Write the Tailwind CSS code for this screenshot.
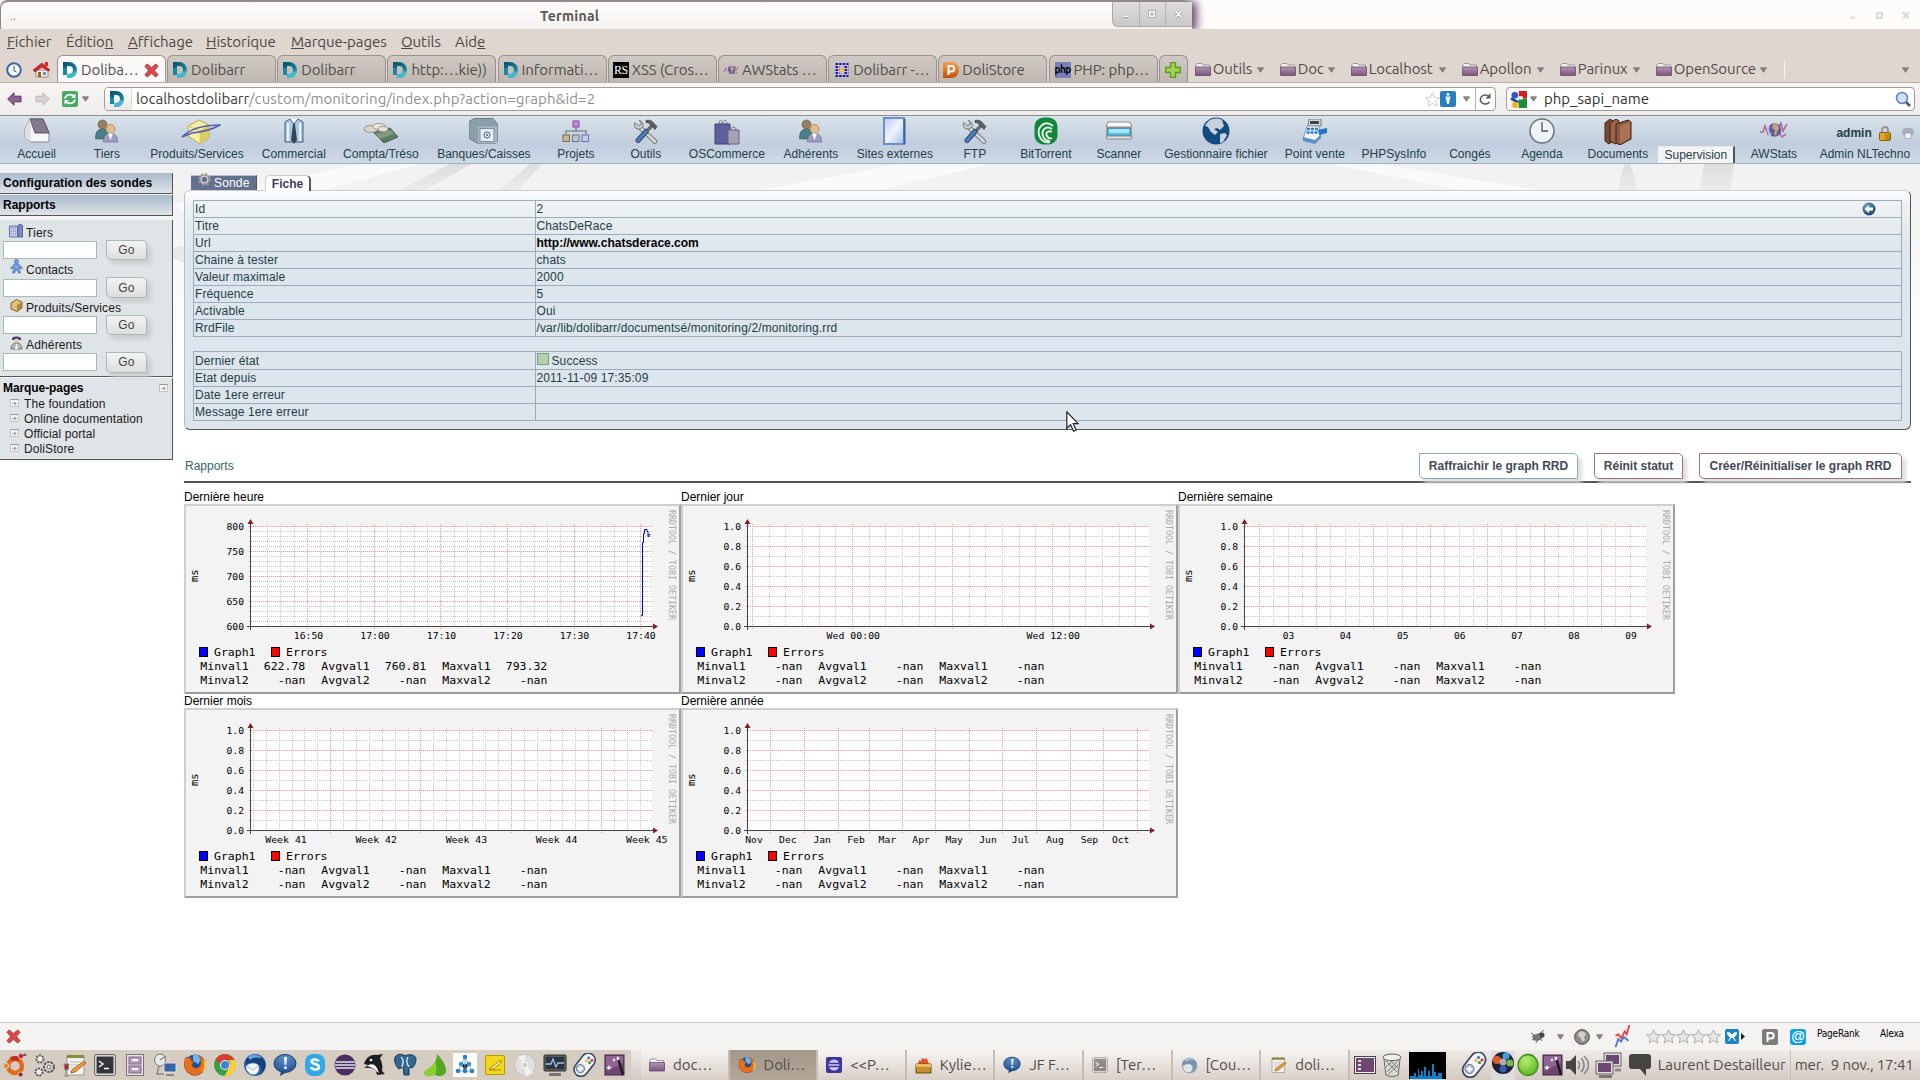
<!DOCTYPE html>
<html lang="fr">
<head>
<meta charset="utf-8">
<title>Dolibarr - Supervision</title>
<script src="https://cdn.jsdelivr.net/npm/@tailwindcss/browser@4"></script>
</head>
<body class="w-[1920px] h-[1080px] overflow-hidden bg-white flex flex-col font-['Liberation_Sans',Arial,sans-serif] text-[12px] text-black">

<svg class="absolute size-0">
  <defs>
    <linearGradient id="gTeal" x1="0" y1="0" x2="1" y2="1"><stop offset="0" stop-color="#0b4f6c"/><stop offset=".6" stop-color="#127a96"/><stop offset="1" stop-color="#4cc3d6"/></linearGradient>
    <linearGradient id="gPurple" x1="0" y1="0" x2="0" y2="1"><stop offset="0" stop-color="#b096b0"/><stop offset="1" stop-color="#7a557c"/></linearGradient>
    <linearGradient id="gOrange" x1="0" y1="0" x2="0" y2="1"><stop offset="0" stop-color="#f6a04c"/><stop offset="1" stop-color="#c2510c"/></linearGradient>
    <linearGradient id="gBlueDoor" x1="0" y1="0" x2="1" y2="1"><stop offset="0" stop-color="#b9cdf0"/><stop offset=".5" stop-color="#eef4fd"/><stop offset="1" stop-color="#a5bfe8"/></linearGradient>
    <linearGradient id="gStreak" x1="0" y1="0" x2="0" y2="1"><stop offset="0" stop-color="#dedede"/><stop offset="1" stop-color="#dedede" stop-opacity="0"/></linearGradient>
    <radialGradient id="gBall" cx=".35" cy=".3" r=".8"><stop offset="0" stop-color="#6fa4c8"/><stop offset="1" stop-color="#123a5c"/></radialGradient>
    <radialGradient id="gGreen" cx=".4" cy=".3" r=".8"><stop offset="0" stop-color="#b8f070"/><stop offset="1" stop-color="#4fae1c"/></radialGradient>
    <radialGradient id="gBubble" cx=".5" cy=".2" r=".9"><stop offset="0" stop-color="#5c93cf"/><stop offset="1" stop-color="#1f4a8a"/></radialGradient>
  </defs>
  <symbol id="doli" viewBox="0 0 16 16"><path fill-rule="evenodd" d="M1 0h6a8 8 0 0 1 0 16H5.500v-4H7a4 4 0 0 0 0-8H5v9H1z" fill="url(#gTeal)"/><path d="M1 6h4v7H1z" fill="#1789a8"/><path d="M5.500 12H7a4 4 0 0 0 3.800-3l4 1A8 8 0 0 1 7 16H5.500z" fill="#45b7cf"/></symbol>
  <symbol id="down" viewBox="0 0 8 6"><path d="M.5.5h7L4 5.500z" fill="#8c8782" stroke="#6d6863" stroke-width=".8"/></symbol>
  <symbol id="folder" viewBox="0 0 16 13"><path d="M1 1.500 2 .5h5l1 1.500h6.500V5H1z" fill="#f4f1f4" stroke="#8b8389" stroke-width=".8"/><path d="M.5 4h15v8.500H.5z" fill="url(#gPurple)" stroke="#6b476d" stroke-width=".8"/></symbol>
  <symbol id="redx" viewBox="0 0 16 16"><path d="M3.500 1 8 5l4.500-4L15 3.500 11 8l4 4.500L12.500 15 8 11l-4.500 4L1 12.500 5 8 1 3.500z" fill="#d94b4b" stroke="#a62828" stroke-width=".9" stroke-linejoin="round"/></symbol>
  <symbol id="tools" viewBox="0 0 26 24"><path d="M7 8 22 22" stroke="#777" stroke-width="4.500" stroke-linecap="round"/><path d="M7 8 22 22" stroke="#d5d8d6" stroke-width="2.800" stroke-linecap="round"/><path d="M2 3l3 3 3-1V2L6 1a5 5 0 0 1 4 6 5 5 0 0 1-8 1 5 5 0 0 1 0-5z" fill="#c8ccca" stroke="#666" stroke-width=".8"/><path d="M19 6 5 21" stroke="#6b6f72" stroke-width="3.500" stroke-linecap="round"/><path d="M13 12 5 21" stroke="#2c4568" stroke-width="5" stroke-linecap="round"/><path d="M13 12 5 21" stroke="#4e7fbd" stroke-width="3.200" stroke-linecap="round"/><path d="M13 1c4-1 7 1 8 3l3 3-2 3-4-4c-1-2-3-3-5-3z" fill="#5b5f5d" stroke="#333" stroke-width=".6"/></symbol>
  <symbol id="people" viewBox="0 0 24 24"><circle cx="8" cy="5.500" r="4.500" fill="#9b7f5e" stroke="#6e5a44" stroke-width=".7"/><path d="M1 20c0-7 2-10 7-10s7 3 7 10z" fill="#4b7f86" stroke="#365c62" stroke-width=".7"/><circle cx="16" cy="10" r="4.500" fill="#e3bb8e" stroke="#a07a50" stroke-width=".7"/><path d="M9 23c0-6 2-8.500 7-8.500s7 2.500 7 8.500z" fill="#9a9cc0" stroke="#6b6d92" stroke-width=".7"/><path d="M13.500 14.500 16 21l2.500-6.500z" fill="#fff"/></symbol>
  <symbol id="awstats" viewBox="0 0 28 18"><path d="M0 11h3l2-6 3 8 2-6M18 7l3-5 2 8 4-7M19 12l3 4 4-3" fill="none" stroke="#b06c94" stroke-width="1.600"/><circle cx="14.500" cy="9" r="6.800" fill="#5a5f9c"/><path d="M13 3c4-1 6 2 6 5l-2 3-1 4-2-2 1-4-3-2z" fill="#c9a07c"/><path d="M9 5c-2 3-1 7 2 9" stroke="#c5c9ea" stroke-width="2" fill="none"/></symbol>
  <symbol id="pad" viewBox="0 0 26 26"><rect x="5" y="-1" width="15" height="28" rx="7.500" transform="rotate(38 13 13)" fill="#f3f5f8" stroke="#3a4a66" stroke-width="1.800"/><circle cx="8" cy="17" r="4.500" fill="#b9c2d0" stroke="#5a6d8e"/><path d="M8 14v6M5 17h6" stroke="#fff" stroke-width="1.800"/><circle cx="17" cy="5.500" r="1.600" fill="#3a74d0"/><circle cx="20.500" cy="8" r="1.600" fill="#d33"/><circle cx="14.500" cy="8.500" r="1.600" fill="#e8c020"/><circle cx="18" cy="10.500" r="1.600" fill="#2a9a3a"/></symbol>
  <symbol id="wand" viewBox="0 0 22 24"><rect x="1" y="2" width="19" height="20" fill="#6f4672" stroke="#432546"/><path d="M2 3h17v7L2 18z" fill="#8f6691"/><path d="M14 5l5 17" stroke="#1a1a1a" stroke-width="2.400"/><path d="M13.500 4l1 3" stroke="#fff" stroke-width="2.400"/><path d="M5 12l1 2 2 .5-2 1-1 2-1-2-2-1 2-.5zM10 5l.6 1.400 1.400.6-1.400.6L10 9l-.6-1.400L8 7l1.400-.6z" fill="#fff"/></symbol>
  <symbol id="ffox" viewBox="0 0 24 24"><circle cx="12" cy="12" r="10.500" fill="#1d4fa0"/><path d="M10 2c5-1 8 2 8 5l-3 4-5-3z" fill="#6db5ea"/><path d="M3 4c2 1 3 1 5 1-1 2 0 3 3 4-2 1-3 3-1 5 3 3 8 0 8-4 0-3-1-5-2-7 5 2 7 6 6.500 10A10.700 10.700 0 1 1 1.500 9C2 7 2 6 3 4z" fill="#e8701a" stroke="#b94a08" stroke-width=".6"/><path d="M20 7c2 4 2 9-2 12 4-1 6-5 5-9-.5-1-2-3-3-3z" fill="#f9cf3e"/></symbol>
  <symbol id="bubble" viewBox="0 0 24 24"><ellipse cx="12" cy="10.500" rx="11" ry="9" fill="url(#gBubble)" stroke="#1b3d72"/><path d="M8 18l-1 5 7-4z" fill="#1f4a8a"/><path d="M11 4h3l-.8 8h-1.500zM11.200 13.500h2.500V16h-2.500z" fill="#fff"/></symbol>
  <symbol id="term" viewBox="0 0 22 22"><rect x=".7" y=".7" width="20.600" height="20.600" rx="1.500" fill="#eee" stroke="#555"/><rect x="2.500" y="2.500" width="17" height="17" fill="#33373b"/><path d="M5 7l4 3-4 3M10 14.500h5" stroke="#fff" stroke-width="1.400" fill="none"/></symbol>
  <symbol id="notepad" viewBox="0 0 24 24"><rect x="4" y="3" width="17" height="19" fill="#f2f2ef" stroke="#999"/><path d="M4 2h17v3H4z" fill="#8b8a3a"/><path d="M7 9h11M7 12h11M7 15h11M7 18h8" stroke="#bbb"/><path d="M9 17 21 8l2 2-11 9-4 1z" fill="#ef9b34" stroke="#8a4b10" stroke-width=".7"/></symbol>
  <symbol id="star" viewBox="0 0 16 16"><path d="M8 .8l2.200 4.800 5.200.6-3.900 3.500 1.100 5.200L8 12.300 3.400 14.900l1.100-5.200L.6 6.200l5.200-.6z" fill="#e6e6e6" stroke="#a5a5a5" stroke-width=".9"/></symbol>
  <symbol id="ext" viewBox="0 0 9 8"><rect x=".5" y=".5" width="8" height="7" fill="#f3f3f3" stroke="#c4c4c4"/><path d="M.5.5h8" stroke="#999"/><path d="M2 4.500h2.500M4.500 3l2 1.500-2 1.500z" stroke="#9a9a9a" stroke-width=".6" fill="#9a9a9a"/></symbol>
  <symbol id="cog" viewBox="0 0 16 16"><circle cx="8" cy="8" r="5" fill="none" stroke="#9a9a98" stroke-width="2.800"/><circle cx="8" cy="8" r="7" fill="none" stroke="#9a9a98" stroke-width="2" stroke-dasharray="2.600 2.900"/><circle cx="8" cy="8" r="4.200" fill="none" stroke="#e2e2e0" stroke-width="1.200"/></symbol>
  <symbol id="tbird" viewBox="0 0 24 24"><circle cx="12" cy="12" r="11" fill="#2465ae"/><path d="M4 5c5-5 15-4 18 4 1 5-1 10-5 13 2-4 2-8-1-10C12 8 7 9 3 12c-1-3 0-5 1-7z" fill="#164079"/><path d="M3 13c3-3 9-4 12-1 2 3 1 7-2 9-5 2-10-2-10-8z" fill="#f3f5f8"/><path d="M4 13l6 4 5-4" stroke="#aab7c8" fill="none"/><path d="M5 4c4-3 10-3 14 1-5-1-9-1-12 2z" fill="#63a6e2"/></symbol>
</svg>

<!-- Title bar -->
<header class="h-[29px] flex-none flex justify-between overflow-hidden bg-[#fdfcfb]">
  <div class="w-[1192px] h-[31px] flex-none flex items-center rounded-t-lg border-t-2 border-l border-[#8d8a87] bg-linear-to-b from-[#fdfcfb] to-[#f4f2f0] shadow-[5px_0_9px_#6c4f74]">
    <span class="w-[30px] flex-none pl-[9px] text-[11px] text-[#777]">..</span>
    <span class="pl-[509px] w-[1081px] flex-none font-['Ubuntu','Noto_Sans',sans-serif] text-[14px] tracking-[0.25px] font-bold text-[#5b5753]">Terminal</span>
    <div class="flex-none flex h-[25px] w-[80px] self-start rounded-bl-md border-l border-b border-[#aaa7a4] bg-linear-to-b from-[#dedddb] to-[#cbc9c7]">
      <svg class="h-full w-[26px]" viewBox="0 0 26 26"><path d="M10 16h5" stroke="#8c8a88" stroke-width="3"/><path d="M10 15.500h5" stroke="#fff" stroke-width="2"/></svg>
      <svg class="h-full w-[26px] border-l border-[#b5b2af]" viewBox="0 0 26 26"><rect x="10" y="10.500" width="5" height="5" fill="none" stroke="#8c8a88" stroke-width="3"/><rect x="10" y="10.500" width="5" height="5" fill="none" stroke="#fff" stroke-width="1.800"/></svg>
      <svg class="h-full w-[26px] border-l border-[#b5b2af]" viewBox="0 0 26 26"><path d="M10 10l6 6.500M16 10l-6 6.500" stroke="#8c8a88" stroke-width="3.200"/><path d="M10 10l6 6.500M16 10l-6 6.500" stroke="#fff" stroke-width="2"/></svg>
    </div>
  </div>
  <svg class="w-[80px] h-[29px]" viewBox="0 0 80 29"><path d="M10 17.500h5" stroke="#dcdad8" stroke-width="2"/><rect x="37" y="13" width="5" height="5" fill="none" stroke="#dcdad8" stroke-width="2"/><path d="M63 12l6 6.500M69 12l-6 6.500" stroke="#dcdad8" stroke-width="2.400"/></svg>
</header>

<!-- Menu bar -->
<nav class="h-[25px] flex-none flex items-center pl-[7px] pt-px bg-[#dfd6cf] font-['Ubuntu','Noto_Sans',sans-serif] text-[15px] tracking-[-0.05px] text-[#4b4845] whitespace-nowrap">
  <span class="w-[59px]"><u>F</u>ichier</span><span class="w-[62px]">Éditio<u>n</u></span><span class="w-[78px]"><u>A</u>ffichage</span><span class="w-[85px]"><u>H</u>istorique</span><span class="w-[110px]"><u>M</u>arque-pages</span><span class="w-[54px]"><u>O</u>utils</span><span>Aid<u>e</u></span>
</nav>

<!-- Tab strip -->
<div class="h-[29px] flex-none flex items-end pt-px bg-[#dfd6cf] border-b border-[#b5aea8] font-['Ubuntu','Noto_Sans',sans-serif] text-[15px] tracking-[-0.1px] text-[#4f4c49] whitespace-nowrap [&>div]:pt-[2px]">
  <div class="w-[57px] h-full flex items-center gap-[11px] pl-[6px]">
    <svg class="size-4 flex-none" viewBox="0 0 16 16"><circle cx="8" cy="8" r="6.800" fill="#f6f9fe" stroke="#3d66a8" stroke-width="2"/><path d="M8 4v4.500l2.500 1.500" stroke="#444" fill="none"/></svg>
    <svg class="w-[18px] h-4 flex-none" viewBox="0 0 18 16"><path d="M3 8h12v7H3z" fill="#f3efe4" stroke="#8d7a63" stroke-width=".8"/><path d="M0 8 9 1l8 7-2 1-6-4-7 5z" fill="#d8262c" stroke="#8e1216" stroke-width=".6"/><path d="M12 0h3v4h-3z" fill="#d8262c"/><path d="M5 10h3v5H5z" fill="#a35c28"/><path d="M10 10h3v3h-3z" fill="#5c8dd6"/></svg>
  </div>
  <div class="w-[109px] h-[27px] mr-px flex items-center gap-[3px] pl-[4px] rounded-t-md border border-b-0 border-[#9b9590] bg-[#faf9f8]"><svg class="size-4 flex-none"><use href="#doli"/></svg><span class="w-[60px]">Doliba…</span><svg class="size-[15px] flex-none"><use href="#redx"/></svg></div>
  <div class="w-[109px] h-[27px] mr-[1.2px] flex items-center gap-[3px] pl-[4px] rounded-t-md border border-b-0 border-[#97918b] bg-linear-to-b from-[#cfc9c3] to-[#bfb8b1]"><svg class="size-4"><use href="#doli"/></svg>Dolibarr</div>
  <div class="w-[109px] h-[27px] mr-[1.2px] flex items-center gap-[3px] pl-[4px] rounded-t-md border border-b-0 border-[#97918b] bg-linear-to-b from-[#cfc9c3] to-[#bfb8b1]"><svg class="size-4"><use href="#doli"/></svg>Dolibarr</div>
  <div class="w-[109px] h-[27px] mr-[1.2px] flex items-center gap-[3px] pl-[4px] rounded-t-md border border-b-0 border-[#97918b] bg-linear-to-b from-[#cfc9c3] to-[#bfb8b1]"><svg class="size-4"><use href="#doli"/></svg>http:…kie))</div>
  <div class="w-[109px] h-[27px] mr-[1.2px] flex items-center gap-[3px] pl-[4px] rounded-t-md border border-b-0 border-[#97918b] bg-linear-to-b from-[#cfc9c3] to-[#bfb8b1]"><svg class="size-4 flex-none"><use href="#doli"/></svg>Informati…</div>
  <div class="w-[109px] h-[27px] mr-[1.2px] flex items-center gap-[3px] pl-[4px] rounded-t-md border border-b-0 border-[#97918b] bg-linear-to-b from-[#cfc9c3] to-[#bfb8b1]"><span class="size-4 flex-none bg-black text-white text-[12px] leading-4 text-center font-['Liberation_Serif',serif] tracking-[-0.5px]">RS</span>XSS (Cros…</div>
  <div class="w-[109px] h-[27px] mr-[1.2px] flex items-center gap-[3px] pl-[4px] rounded-t-md border border-b-0 border-[#97918b] bg-linear-to-b from-[#cfc9c3] to-[#bfb8b1]"><svg class="w-4 h-3 flex-none"><use href="#awstats"/></svg>AWStats …</div>
  <div class="w-[109px] h-[27px] mr-[1.2px] flex items-center gap-[3px] pl-[5px] rounded-t-md border border-b-0 border-[#97918b] bg-linear-to-b from-[#cfc9c3] to-[#bfb8b1]"><svg class="size-4 flex-none" viewBox="0 0 16 16"><path d="M1.500 2h13M1.500 5h4M10.500 5h4M1.500 8h4M10.500 8h4M1.500 11h4M10.500 11h4M1.500 14h13" stroke="#1a16c0" stroke-width="2.200" stroke-dasharray="2.600 1"/><path d="M8 5l3 4H5z" fill="#f2c81c"/></svg>Dolibarr -…</div>
  <div class="w-[109px] h-[27px] mr-[1.2px] flex items-center gap-[3px] pl-[4px] rounded-t-md border border-b-0 border-[#97918b] bg-linear-to-b from-[#cfc9c3] to-[#bfb8b1]"><svg class="size-4" viewBox="0 0 16 16"><path d="M0 0h9a7 8 0 0 1 0 16H0z" fill="url(#gOrange)"/><path d="M5.500 13V4h3a2.500 2.500 0 0 1 0 5.500h-3" fill="none" stroke="#fff" stroke-width="2"/></svg>DoliStore</div>
  <div class="w-[109px] h-[27px] mr-[1.2px] flex items-center gap-[3px] pl-[5px] rounded-t-md border border-b-0 border-[#97918b] bg-linear-to-b from-[#cfc9c3] to-[#bfb8b1]"><span class="size-4 flex-none bg-[#7b7fb8] text-black text-[10px] leading-4 text-center tracking-[-0.5px] font-bold">php</span>PHP: php…</div>
  <div class="w-[29px] h-[27px] flex items-center justify-center rounded-t-md border border-b-0 border-[#97918b] bg-linear-to-b from-[#cfc9c3] to-[#bfb8b1]"><svg class="size-4" viewBox="0 0 16 16"><path d="M5.500.7h5v4.800h4.800v5h-4.800v4.800h-5v-4.800H.7v-5h4.800z" fill="#a3d352" stroke="#5a9a1c" stroke-width="1.300"/></svg></div>
  <div class="h-[27px] flex items-center pl-[7px]">
    <div class="w-[85px] flex items-center"><svg class="w-4 h-[13px] mr-0.5"><use href="#folder"/></svg><span class="w-[44px]">Outils</span><svg class="w-[7px] h-[6px]"><use href="#down"/></svg></div>
    <div class="w-[71px] flex items-center"><svg class="w-4 h-[13px] mr-0.5"><use href="#folder"/></svg><span class="w-[30px]">Doc</span><svg class="w-[7px] h-[6px]"><use href="#down"/></svg></div>
    <div class="w-[111px] flex items-center"><svg class="w-4 h-[13px] mr-0.5"><use href="#folder"/></svg><span class="w-[70px]">Localhost</span><svg class="w-[7px] h-[6px]"><use href="#down"/></svg></div>
    <div class="w-[98px] flex items-center"><svg class="w-4 h-[13px] mr-0.5"><use href="#folder"/></svg><span class="w-[57px]">Apollon</span><svg class="w-[7px] h-[6px]"><use href="#down"/></svg></div>
    <div class="w-[96px] flex items-center"><svg class="w-4 h-[13px] mr-0.5"><use href="#folder"/></svg><span class="w-[55px]">Parinux</span><svg class="w-[7px] h-[6px]"><use href="#down"/></svg></div>
    <div class="w-[128px] flex items-center"><svg class="w-4 h-[13px] mr-0.5"><use href="#folder"/></svg><span class="w-[86px]">OpenSource</span><svg class="w-[7px] h-[6px]"><use href="#down"/></svg></div>
    <div class="w-[118px] h-[18px] border-l border-[#f5f1ee]"></div><svg class="w-[7px] h-[6px]"><use href="#down"/></svg>
  </div>
</div>

<!-- Address bar -->
<div class="h-[33px] flex-none flex items-center bg-linear-to-b from-[#f7f5f4] to-[#efedeb] border-b border-[#8e8b88] font-['Ubuntu','Noto_Sans',sans-serif] text-[15px] whitespace-nowrap">
  <div class="w-[104px] flex items-center pl-[7px]">
    <svg class="w-[15px] h-[14px] mr-[13px]" viewBox="0 0 15 14"><path d="M.7 7 7 .8v3.400h7v5.600H7v3.400z" fill="#8c6490" stroke="#523257"/></svg>
    <svg class="w-[15px] h-[14px] mr-[12px]" viewBox="0 0 15 14"><path d="M14.300 7 8 .8v3.400H1v5.600h7v3.400z" fill="#d6d4d2" stroke="#bab7b4"/></svg>
    <svg class="size-4 mr-1" viewBox="0 0 16 16"><rect width="16" height="16" rx="2" fill="#47ac62"/><path d="M3 7.500a5 4.500 0 0 1 9-2M13 8.500a5 4.500 0 0 1-9 2" stroke="#fff" stroke-width="1.700" fill="none"/><path d="M13.500 2.500V7H9zM2.500 13.500V9H7z" fill="#fff"/></svg>
    <svg class="w-[7px] h-[6px]"><use href="#down"/></svg>
  </div>
  <div class="w-[1392px] h-[24px] flex items-center rounded-[4px] border border-[#a09a94] bg-white">
    <div class="w-[27px] h-full flex items-center pl-[4px] bg-linear-to-b from-white to-[#e9e8e6] border-r border-[#dedbd8] rounded-l-[3px]"><svg class="size-4"><use href="#doli"/></svg></div>
    <div class="w-[1294px] pl-[4px] text-[#8f8f8f]"><span class="text-[#3c3c3c] tracking-[-0.05px]">localhostdolibarr</span><span class="tracking-[0.09px]">/custom/monitoring/index.php?action=graph&amp;id=2</span></div>
    <svg class="size-[15px]" viewBox="0 0 16 16"><path d="M8 .8l2.200 4.800 5.200.6-3.900 3.500 1.100 5.200L8 12.300 3.400 14.900l1.100-5.200L.6 6.200l5.200-.6z" fill="#fff" stroke="#c9c9c9"/></svg>
    <svg class="size-4" viewBox="0 0 16 16"><rect width="16" height="16" rx="2" fill="#2580c0"/><circle cx="8" cy="3.300" r="1.400" fill="#fff"/><path d="M5.500 5.500h5L8.800 13h-1.600z" fill="#fff"/></svg>
    <svg class="w-[7px] h-[6px] ml-[7px] mr-[5px]"><use href="#down"/></svg>
    <div class="h-full w-[20px] flex items-center border-l border-[#b6b1ac] pl-[3px]"><svg class="size-[13px]" viewBox="0 0 13 13"><path d="M10 3.500A5 4.500 0 1 0 10.500 9" fill="none" stroke="#5c5956" stroke-width="1.500"/><path d="M11.500 0v5.500H6.500z" fill="#5c5956"/></svg></div>
  </div>
  <div class="ml-[10px] w-[409px] h-[24px] flex items-center rounded-[4px] border border-[#a09a94] bg-white pl-[3px]">
    <svg class="size-[17px]" viewBox="0 0 16 16"><rect x="8" width="8" height="7" fill="#d9201d"/><rect x="8" y="7" width="8" height="9" fill="#1a8f3b"/><rect width="8" height="16" fill="#eef"/><circle cx="4.500" cy="4" r="3" fill="#3355b4" /><path d="M1 7l7 4" stroke="#1a3c9c" stroke-width="2.500"/><circle cx="5" cy="13" r="3" fill="#f0b41c"/><path d="M8 5h4v3H9z" fill="#fff"/></svg>
    <svg class="w-[7px] h-[6px] ml-[3px] mr-[7px]"><use href="#down"/></svg>
    <span class="w-[351px] text-[#333]">php_sapi_name</span>
    <svg class="size-4" viewBox="0 0 16 16"><path d="M11 11l4 4" stroke="#555" stroke-width="2.600"/><circle cx="7" cy="7" r="5.500" fill="#cfe2f6" stroke="#5b85bd" stroke-width="1.500"/></svg>
  </div>
</div>

<!-- Application menu -->
<nav class="h-[48px] flex-none flex items-stretch bg-linear-to-b from-[#d9e3ea] from-0% via-[#c1cddd] via-60% to-[#cdd9e6] border-b border-[#a3b1bd] text-[#234046] whitespace-nowrap [&>div]:flex-none [&>div]:flex [&>div]:flex-col [&>div]:items-center [&>div]:justify-end">
  <div class="w-[73.4px]"><svg class="w-[26px] h-[26px] mb-[1px]" viewBox="0 0 26 26"><path d="M1 11v9l6 4h18V14L19 1H6z" fill="#f7f7f7" stroke="#8b8b90"/><path d="M6 1h13l6 14H11z" fill="#84798f" stroke="#5f566b"/><path d="M6 1 1 11v9l6 4V14z" fill="#dfdfe4"/></svg><span class="leading-[18px]">Accueil</span></div>
  <div class="w-[67.2px]"><svg class="w-[25px] h-[24px] mb-[2px]"><use href="#people"/></svg><span class="leading-[18px]">Tiers</span></div>
  <div class="w-[112.8px]"><svg class="w-[40px] h-[26px] ml-[9px]" viewBox="0 0 40 26"><path d="M18 1 7 7v10l12 8 9-6V6z" fill="#f5efa5" stroke="#b5a955"/><path d="M7 7l12 5 9-6M19 12v13" fill="none" stroke="#d8cb66"/><path d="M19 12l9-6v13l-9 6z" fill="#dccb62"/><path d="M1 18C10 9 25 6 39 6 32 10 22 13 11 14z" fill="none" stroke="#5a62b5" stroke-width="1.700"/></svg><span class="leading-[18px]">Produits/Services</span></div>
  <div class="w-[81px]"><svg class="w-[20px] h-[26px]" viewBox="0 0 20 26"><path d="M1 3 6 0h8l5 3v20H1z" fill="#a6c8ea" stroke="#4b5e75"/><path d="M4 4v18M16 4v18" stroke="#e8f2fc" stroke-width="2"/><path d="M6 0l4 5 4-5" fill="#fff" stroke="#4b5e75"/><path d="M9 5h2l2 16-3 4-3-4z" fill="#3c4552"/></svg><span class="leading-[18px]">Commercial</span></div>
  <div class="w-[93px]"><svg class="w-[35px] h-[20px] mb-[2px]" viewBox="0 0 35 20"><path d="M10 9l17-4 8 9-14 6z" fill="#5f7a62" stroke="#47604d"/><path d="M12 11l16-4 3 4-14 5z" fill="#7f9a80"/><ellipse cx="8" cy="6" rx="7" ry="3.500" fill="#d9d3c8" stroke="#998"/><ellipse cx="16" cy="3.500" rx="6" ry="3" fill="#ebe6dd" stroke="#998"/><ellipse cx="20" cy="6" rx="5" ry="2.500" fill="#f1dfd8" stroke="#998"/></svg><span class="leading-[18px]">Compta/Tréso</span></div>
  <div class="w-[113px]"><svg class="w-[29px] h-[27px]" viewBox="0 0 29 26"><path d="M0 3 5 0h19l5 6v17l-3 2H9L0 20z" fill="#8c9ea9" stroke="#6d7f8a"/><path d="M9 8h19v17H9z" fill="#a9b8c2"/><path d="M11 10h14v13H11z" fill="#e4edf2" stroke="#7f929d"/><circle cx="18" cy="16.500" r="3" fill="none" stroke="#4e6069"/><circle cx="18" cy="16.500" r="1" fill="#4e6069"/></svg><span class="leading-[18px]">Banques/Caisses</span></div>
  <div class="w-[71px]"><svg class="w-[28px] h-[24px] mb-[2px]" viewBox="0 0 28 24"><path d="M14 8v4M4 15v-3h20v3" fill="none" stroke="#6d6d75" stroke-width="1.200"/><rect x="11" y="2" width="6" height="6" fill="#c78ad8" stroke="#8b4da0"/><rect x="1" y="16" width="6.500" height="6.500" fill="#c7b49a" stroke="#7b6a50"/><rect x="10.500" y="16" width="6.500" height="6.500" fill="#b9c6cc" stroke="#6b7a80"/><rect x="20" y="16" width="6.500" height="6.500" fill="#c6c8ee" stroke="#6b6eb0"/></svg><span class="leading-[18px]">Projets</span></div>
  <div class="w-[69px]"><svg class="w-[26px] h-[25px] mb-[1px]"><use href="#tools"/></svg><span class="leading-[18px]">Outils</span></div>
  <div class="w-[93px]"><svg class="w-[26px] h-[26px]" viewBox="0 0 26 26"><path d="M5 5c0-5 3-5 3 0M9 5c0-5 4-5 4 0" fill="none" stroke="#777"/><path d="M1 5h15v20H1z" fill="#5f5fa0" stroke="#41417a"/><path d="M17 11c0-4 5-4 5 0" fill="none" stroke="#666"/><path d="M14 11h11v14H14z" fill="#a5a3b3" stroke="#765a8e"/></svg><span class="leading-[18px]">OSCommerce</span></div>
  <div class="w-[75px]"><svg class="w-[25px] h-[24px] mb-[2px]"><use href="#people"/></svg><span class="leading-[18px]">Adhérents</span></div>
  <div class="w-[93px]"><svg class="w-[23px] h-[28px] -mt-1" viewBox="0 0 23 28"><rect x="1" y="1" width="20" height="26" fill="url(#gBlueDoor)" stroke="#6d90cc" stroke-width="2"/><path d="M21.500 2v25" stroke="#3a62a8" stroke-width="2"/></svg><span class="leading-[18px]">Sites externes</span></div>
  <div class="w-[67px]"><svg class="w-[26px] h-[25px] mb-[1px]"><use href="#tools"/></svg><span class="leading-[18px]">FTP</span></div>
  <div class="w-[75px]"><svg class="w-[24px] h-[28px]" viewBox="0 0 24 28"><rect x=".5" y=".5" width="23" height="27" rx="9" fill="#10873b"/><path d="M19 9C10 2 3 11 5 18s8 8 11 7M18 12c-6-4-11 1-9 7 1 3 4 5 7 5M18 15c-4-2-7 1-5 4 1 2 3 3 5 2" fill="none" stroke="#e8f8ec" stroke-width="1.900"/></svg><span class="leading-[18px]">BitTorrent</span></div>
  <div class="w-[71px]"><svg class="w-[28px] h-[20px] mb-[4px]" viewBox="0 0 28 20"><path d="M3 1h22l2 5H1z" fill="#fafafa" stroke="#8b8b8b"/><path d="M2 7h24v8H2z" fill="#4cc0e8" stroke="#666"/><path d="M4 8h20v4H4z" fill="#a8e4f7"/><path d="M1 15h26l-1 3H2z" fill="#e2e2e2" stroke="#888"/></svg><span class="leading-[18px]">Scanner</span></div>
  <div class="w-[123px]"><svg class="w-[28px] h-[28px]" viewBox="0 0 28 28"><circle cx="14" cy="14" r="13.500" fill="#134a80"/><path d="M8 3c4-2 9-2 12 0l2 6-4 4-3-2-3 1 4 3-3 3-4-3-3-5-3-1C4 7 6 4 8 3zM18 17l5-1 2 2-4 7-3 1z" fill="#c9d2da"/></svg><span class="leading-[18px]">Gestionnaire fichier</span></div>
  <div class="w-[75px]"><svg class="w-[26px] h-[25px] mb-[1px]" viewBox="0 0 26 25"><path d="M7 0h12v7H6z" fill="#d8dce0" stroke="#777"/><path d="M8 2h9v3H8z" fill="#444"/><path d="M5 7h12l2 9-6 8-12-4z" fill="#f2f5f8" stroke="#8a98a8"/><path d="M5 10h11M4.500 13.500h11" stroke="#2d7dd2" stroke-width="2.400" stroke-dasharray="3 1"/><path d="M1 18l12 3 6-6v4l-6 6-12-3z" fill="#5a8fc8"/><path d="M16 11l9-2v5l-8 2z" fill="#2672c4"/></svg><span class="leading-[18px]">Point vente</span></div>
  <div class="w-[83px]"><span class="leading-[18px]">PHPSysInfo</span></div>
  <div class="w-[69px]"><span class="leading-[18px]">Congés</span></div>
  <div class="w-[75px]"><svg class="w-[26px] h-[27px]" viewBox="0 0 26 27"><circle cx="13" cy="13" r="12" fill="#eef3f8" stroke="#6e7277" stroke-width="1.500"/><path d="M13 4v9h6" fill="none" stroke="#555" stroke-width="1.300"/></svg><span class="leading-[18px]">Agenda</span></div>
  <div class="w-[77px]"><svg class="w-[28px] h-[26px]" viewBox="0 0 28 26"><path d="M1 4 6 0l3 2v20l-4 3-4-3z" fill="#7b4a33" stroke="#3f2214"/><path d="M6 4l6-4 3 2v21l-4 2-5-3z" fill="#9b6547" stroke="#3f2214"/><path d="M12 5l12-4 3 2v17l-11 6-4-2z" fill="#8b5840" stroke="#3f2214"/><path d="M16 7l10-4v16l-10 6z" fill="#a97455"/></svg><span class="leading-[18px]">Documents</span></div>
  <div class="w-[81px]"><span class="w-[77px] h-[17px] leading-[16px] text-center bg-[#f4f4f4] border-r-2 border-[#555] border-t border-t-[#e8e8e8]">Supervision</span></div>
  <div class="w-[73px]"><svg class="w-[28px] h-[18px] mb-[6px]"><use href="#awstats"/></svg><span class="leading-[18px]">AWStats</span></div>
  <div class="w-[109px]">
    <span class="self-stretch h-[24px] flex items-center pl-[26px]"><b class="w-[43px]">admin</b><svg class="w-[12px] h-[15px] mr-[11px]" viewBox="0 0 12 15"><path d="M3 7V4a3 3 0 0 1 6 0v3" fill="none" stroke="#9a9484" stroke-width="1.800"/><rect x=".5" y="6.500" width="11" height="8" rx="1" fill="#e0a526" stroke="#8a5f10"/><path d="M6 8h5v6H6z" fill="#a86c12" opacity=".6"/></svg><svg class="w-[12px] h-[12px]" viewBox="0 0 12 12"><path d="M2 1h8l2 3H0zM0 3.500h12V8H0z" fill="#a9afb8"/><path d="M3 6h6v5.500H3z" fill="#f4f4f4" stroke="#999" stroke-width=".7"/></svg></span>
    <span class="leading-[18px]">Admin NLTechno</span></div>
</nav>

<!-- Page -->
<main class="relative h-[858px] flex-none flex items-start bg-[linear-gradient(to_bottom,#f1f1f1_0,#f4f4f4_60px,#ffffff_185px)]">
  <svg class="absolute left-0 top-0 w-[1920px] h-[120px]" viewBox="0 0 1920 120">
    <path d="M400 26 450 0h22L425 26zM500 26l30-26h12l-24 26zM1618 26l6-26h6l8 26zM1698 40l6-40h30l-6 40z" fill="url(#gStreak)"/>
    <path d="M173 40 360 0h60L200 60zM760 26 900 0h90l-110 26zM1380 0l160 26h-80L1330 0z" fill="#fafafa"/>
    <path d="M173 85c6-4 10-3 11 0v14c-5-3-8-4-11-4z" fill="#e9e9e9"/>
  </svg>
  <aside class="relative w-[173px] flex-none pt-[9px] text-[12px] text-[#1a1a1a]">
    <div class="h-[21px] mb-px pl-[3px] leading-[20px] font-bold text-black tracking-[0.05px] bg-linear-to-b from-[#a9b9cc] to-[#dfe4e8] border-r border-b border-[#555]">Configuration des sondes</div>
    <div class="h-[21px] mb-1 pl-[3px] leading-[20px] font-bold text-black bg-linear-to-b from-[#a9b9cc] to-[#dfe4e8] border-r border-b border-[#555]">Rapports</div>
    <div class="h-[157px] mb-px pt-[2px] bg-[#dfe4e7] border-r border-b border-[#555]">
      <div class="h-[37px]"><div class="h-[19px] flex items-end pl-[9px]"><svg class="w-[14px] h-[14px] mb-[3px] mr-[3px]" viewBox="0 0 14 14"><path d="M.5 2h8v11h-8z" fill="#c6cbea" stroke="#6a70a8"/><path d="M2 4h5M2 7h5M2 10h5" stroke="#6a70a8" stroke-dasharray="1 1"/><path d="M9 1.500 11 0l2.500 1.500V13H9z" fill="#8088bd" stroke="#5a608f"/></svg><span class="leading-[15px] tracking-[0.2px]">Tiers</span></div>
        <div class="flex items-start pl-[3px]"><span class="w-[94px] h-[18px] bg-white border border-[#a8bab8]"></span><span class="ml-[9px] -mt-px w-[41px] h-[20px] text-center leading-[18px] tracking-[0.3px] text-[#444] bg-linear-to-b from-[#f3f3f3] to-[#dcdfde] border border-[#a8bab8] rounded-tr-[5px] rounded-bl-[5px] shadow-[4px_4px_4px_#ccc]">Go</span></div></div>
      <div class="h-[38px]"><div class="h-[19px] mb-px flex items-end pl-[10px]"><svg class="w-[13px] h-[15px] mb-[4px] mr-[3px]" viewBox="0 0 13 15"><circle cx="6.500" cy="2.500" r="2" fill="#7fa3e4" stroke="#3b5ea8" stroke-width=".7"/><path d="M4.500 5h4l4 4-1 1-3-2 2 6H8.500l-2-4-2 4h-2l2-6-3 2-1-1z" fill="#7fa3e4" stroke="#3b5ea8" stroke-width=".7"/></svg><span class="leading-[15px]">Contacts</span></div>
        <div class="flex items-start pl-[3px]"><span class="w-[94px] h-[18px] bg-white border border-[#a8bab8]"></span><span class="ml-[9px] -mt-[2px] w-[41px] h-[21px] text-center leading-[20px] tracking-[0.3px] text-[#444] bg-linear-to-b from-[#f3f3f3] to-[#dcdfde] border border-[#a8bab8] rounded-tr-[5px] rounded-bl-[5px] shadow-[4px_4px_4px_#ccc]">Go</span></div></div>
      <div class="h-[37px]"><div class="h-[19px] flex items-end pl-[10px]"><svg class="w-[13px] h-[13px] mb-[4px] mr-[3px]" viewBox="0 0 13 13"><path d="M6.500.5 12 3v6l-5 3.500L1 10V4z" fill="#dcc07c" stroke="#856528"/><path d="M7 6l5-3v6l-5 3.500z" fill="#a88640"/></svg><span class="leading-[15px] tracking-[0.1px]">Produits/Services</span></div>
        <div class="flex items-start pl-[3px]"><span class="w-[94px] h-[18px] bg-white border border-[#a8bab8]"></span><span class="ml-[9px] -mt-px w-[41px] h-[20px] text-center leading-[18px] tracking-[0.3px] text-[#444] bg-linear-to-b from-[#f3f3f3] to-[#dcdfde] border border-[#a8bab8] rounded-tr-[5px] rounded-bl-[5px] shadow-[4px_4px_4px_#ccc]">Go</span></div></div>
      <div class="h-[37px]"><div class="h-[19px] flex items-end pl-[10px]"><svg class="w-[13px] h-[14px] mb-[3px] mr-[3px]" viewBox="0 0 13 14"><path d="M2 2c2-2 7-2 9 0v2H2z" fill="#4a4170"/><circle cx="6.500" cy="5" r="2.500" fill="#e6cfb0"/><path d="M1 13c0-4 2-6 5.500-6s5.500 2 5.500 6z" fill="#b7b7b7" stroke="#777"/><path d="M6.500 7 5 13h3z" fill="#fff"/></svg><span class="leading-[15px] tracking-[0.15px]">Adhérents</span></div>
        <div class="flex items-start pl-[3px]"><span class="w-[94px] h-[18px] bg-white border border-[#a8bab8]"></span><span class="ml-[9px] -mt-px w-[41px] h-[21px] text-center leading-[19px] tracking-[0.3px] text-[#444] bg-linear-to-b from-[#f3f3f3] to-[#dcdfde] border border-[#a8bab8] rounded-tr-[5px] rounded-bl-[5px] shadow-[4px_4px_4px_#ccc]">Go</span></div></div>
    </div>
    <div class="h-[82px] pt-[2px] bg-[#dfe4e7] border-r border-b border-[#555] tracking-[0.1px]">
      <div class="h-[16px] flex items-center justify-between pl-[3px] pr-[4px]"><b class="text-black tracking-[-0.08px]">Marque-pages</b><svg class="w-[9px] h-[8px]"><use href="#ext"/></svg></div>
      <div class="h-[15px] flex items-center gap-[5px] pl-[10px]"><svg class="w-[9px] h-[8px] mb-0.5"><use href="#ext"/></svg>The foundation</div>
      <div class="h-[15px] flex items-center gap-[5px] pl-[10px]"><svg class="w-[9px] h-[8px] mb-0.5"><use href="#ext"/></svg>Online documentation</div>
      <div class="h-[15px] flex items-center gap-[5px] pl-[10px]"><svg class="w-[9px] h-[8px] mb-0.5"><use href="#ext"/></svg>Official portal</div>
      <div class="h-[15px] flex items-center gap-[5px] pl-[10px]"><svg class="w-[9px] h-[8px] mb-0.5"><use href="#ext"/></svg>DoliStore</div>
    </div>
  </aside>

  <section class="relative w-[1727px] ml-[11px] flex-none pt-[11px]">
    <div class="h-[15px] flex items-end pl-[7px]">
      <span class="w-[66px] h-[15px] flex items-center bg-[#64708f] border-t border-[#b8bdcb] border-r border-r-[#555] text-white tracking-[0.15px]"><svg class="size-[13px] ml-[7px] mr-[3px] -mt-[7px]"><use href="#cog"/></svg>Sonde</span>
      <span class="relative w-[46px] h-[16px] -mb-px ml-[8px] text-center leading-[16px] font-bold text-[#3c4254] bg-white border-t border-l border-[#ccc] border-r-2 border-r-[#555] rounded-t-[5px]">Fiche</span>
    </div>
    <div class="h-[240px] px-[8px] pt-[9px] rounded-[6px] border border-t-[#ccc] border-l-[#bbb] border-r-[#555] border-b-[#555] bg-[linear-gradient(to_bottom,#ffffff_0,#eef2f3_12px,#e2e9ec_45px,#dde6ec_62px,#dde5ec_100%)] text-[#234046] tracking-[0.12px]">
      <div class="border-t border-l border-r border-[#9bacbc] [&>div]:h-[17px] [&>div]:flex [&>div]:border-b [&>div]:border-[#9bacbc] [&>div]:leading-[17px] [&_span]:w-[341px] [&_span]:pl-px [&_p]:flex-1 [&_p]:pl-[0.5px] [&_p]:border-l [&_p]:border-[#9bacbc]">
        <div><span>Id</span><p class="flex justify-between items-center">2<svg class="size-[14px] mr-[25px]" viewBox="0 0 14 14"><circle cx="7" cy="7" r="6.500" fill="url(#gBall)"/><path d="M2.500 7 7 3v2.500h4v3H7V11z" fill="#fff"/></svg></p></div>
        <div><span>Titre</span><p>ChatsDeRace</p></div>
        <div><span>Url</span><p class="font-bold text-black tracking-normal">http://www.chatsderace.com</p></div>
        <div><span>Chaine à tester</span><p>chats</p></div>
        <div><span>Valeur maximale</span><p>2000</p></div>
        <div><span>Fréquence</span><p>5</p></div>
        <div><span>Activable</span><p>Oui</p></div>
        <div><span>RrdFile</span><p>/var/lib/dolibarr/documentsé/monitoring/2/monitoring.rrd</p></div>
      </div>
      <div class="mt-[14px] border-t border-l border-r border-[#9bacbc] [&>div]:h-[17px] [&>div]:flex [&>div]:border-b [&>div]:border-[#9bacbc] [&>div]:leading-[17px] [&_span]:w-[341px] [&_span]:pl-px [&_p]:flex-1 [&_p]:pl-[0.5px] [&_p]:border-l [&_p]:border-[#9bacbc]">
        <div class="h-[18px]! pt-px"><span>Dernier état</span><p class="-mt-px pt-px flex items-center gap-[3px]"><i class="size-[12px] mb-1 bg-[#b2cfae] border border-[#7f9f7c]"></i>Success</p></div>
        <div><span>Etat depuis</span><p>2011-11-09 17:35:09</p></div>
        <div><span>Date 1ere erreur</span><p></p></div>
        <div><span>Message 1ere erreur</span><p></p></div>
      </div>
    </div>

    <div class="mt-[23px] h-[30px] flex items-start border-b-2 border-[#555] pl-px">
      <span class="flex-1 leading-[26px] text-[#336666]">Rapports</span>
      <span class="w-[159px] h-[26px] mr-[16px] text-center leading-[24px] font-bold text-[#434956] bg-white border border-[#8aabbd] rounded-tr-[5px] rounded-bl-[5px] shadow-[4px_4px_4px_#ddd]">Raffraichir le graph RRD</span>
      <span class="w-[89px] h-[26px] mr-[16px] text-center leading-[24px] font-bold text-[#434956] bg-white border border-[#997777] rounded-tr-[5px] rounded-bl-[5px] shadow-[4px_4px_4px_#ddd]">Réinit statut</span>
      <span class="w-[203px] h-[26px] mr-[9px] text-center leading-[24px] font-bold text-[#434956] bg-white border border-[#997777] rounded-tr-[5px] rounded-bl-[5px] shadow-[4px_4px_4px_#ddd]">Créer/Réinitialiser le graph RRD</span>
    </div>

    <div id="charts" class="mt-[7px] flex flex-wrap"></div>
  </section>
</main>

<!-- Add-on bar -->
<div class="h-[28px] flex-none flex items-center bg-[#f5f3f2] border-t border-[#cac7c4]">
  <svg class="size-[15px] ml-[6px] mr-[1509px]"><use href="#redx"/></svg>
  <svg class="w-[16px] h-[14px] mr-[11px]" viewBox="0 0 16 14"><ellipse cx="8" cy="7" rx="5.500" ry="3.500" fill="#777" transform="rotate(-20 8 7)"/><path d="M1 3l5 3M2 10l4-2M6 13l2-4M12 11l-2-3M9 4l5-4M4 5 2 7" stroke="#666"/><circle cx="12" cy="5" r="2.500" fill="#444"/></svg>
  <svg class="w-[7px] h-[6px] mr-[10px]"><use href="#down"/></svg>
  <svg class="size-4 mr-[6px]" viewBox="0 0 16 16"><circle cx="8" cy="8" r="7.400" fill="#8c8c8c" stroke="#555"/><path d="M5 3c3-2 6 0 7 2l-2 3 1 3-3 2-1-4-3-2z" fill="#cfcfcf"/></svg>
  <svg class="w-[7px] h-[6px] mr-[10px]"><use href="#down"/></svg>
  <svg class="w-[18px] h-[24px] mr-[15px]" viewBox="0 0 18 26"><path d="M2 12l3-2 3 4 4-7 2 3 3-10" fill="none" stroke="#e2474b" stroke-width="2"/><path d="M2 24l3-9 3 3 3-5 5 4" fill="none" stroke="#5577c9" stroke-width="2"/></svg>
  <svg class="size-[15px]"><use href="#star"/></svg><svg class="size-[15px]"><use href="#star"/></svg><svg class="size-[15px]"><use href="#star"/></svg><svg class="size-[15px]"><use href="#star"/></svg><svg class="size-[15px] mr-[4px]"><use href="#star"/></svg>
  <svg class="w-[20px] h-[15px] mr-[17px]" viewBox="0 0 20 15"><rect width="14" height="15" rx="2" fill="#1b84c4"/><path d="M2.500 3.500c3 0 5 2.500 4 5-2-.5-4-2-4-5zM11.500 3.500c-3 0-5 2.500-4 5 2-.5 4-2 4-5zM4 12c0-2 1-3 2.500-3.500M10 12c0-2-1-3-2.500-3.500" fill="#fff" stroke="#fff"/><path d="M16 4l4 3.500-4 3.500z" fill="#222"/></svg>
  <svg class="size-4 mr-[12px]" viewBox="0 0 16 16"><rect width="16" height="16" rx="2" fill="#7d7d7d"/><path d="M5.500 13V4h3.500a2.500 2.500 0 0 1 0 5.500H5.500" fill="none" stroke="#fff" stroke-width="2"/></svg>
  <span class="size-4 mr-[11px] rounded-[3px] bg-[#12a0e4] text-white text-[14px] font-bold leading-[15px] text-center">@</span>
  <span class="w-[63px] mb-[7px] text-[10px] font-['DejaVu_Sans_Condensed','DejaVu_Sans',sans-serif] tracking-[-0.2px]">PageRank</span><span class="mb-[7px] text-[10px] font-['DejaVu_Sans_Condensed','DejaVu_Sans',sans-serif] tracking-[-0.2px]">Alexa</span>
</div>

<!-- Desktop panel -->
<footer class="h-[30px] flex-none flex items-center bg-linear-to-b from-[#efebe7] to-[#d3cac2] font-['Ubuntu','Noto_Sans',sans-serif] text-[15px] tracking-[-0.05px] text-[#4f4b48] whitespace-nowrap">
  <div class="w-[631px] h-full flex-none flex items-center bg-[#d6cdc2] gap-[6px] pl-[3px] mr-[10px] [&>svg]:size-6">
    <svg viewBox="0 0 24 24"><circle cx="12" cy="13" r="7" fill="none" stroke="#e26a1b" stroke-width="4.500"/><path d="M8 6.500a8 8 0 0 1 8 0" stroke="#c03018" stroke-width="4.500" fill="none"/><circle cx="3" cy="13" r="2.800" fill="#e88a2a" stroke="#d6cdc2"/><circle cx="18" cy="3" r="2.800" fill="#c23" stroke="#d6cdc2"/><circle cx="17.500" cy="21.500" r="2.500" fill="#a01c28" stroke="#d6cdc2"/><path d="M19 3l3-3 2 3z" fill="#666"/></svg>
    <svg viewBox="0 0 24 24"><circle cx="16" cy="14" r="5" fill="#ddd" stroke="#555" stroke-width="2" stroke-dasharray="2.500 1"/><circle cx="7" cy="6" r="3.500" fill="#eee" stroke="#555" stroke-width="2" stroke-dasharray="2 1"/><circle cx="6" cy="19" r="3.500" fill="#eee" stroke="#555" stroke-width="2" stroke-dasharray="2 1"/><circle cx="16" cy="14" r="2" fill="#fff" stroke="#666"/></svg>
    <svg viewBox="0 0 24 24"><use href="#notepad"/><path d="M1 11h5l-1 6h-3zM3 17v6M1 23h5" fill="#b32020" stroke="#888"/></svg>
    <svg viewBox="0 0 24 24"><use href="#term" x="1" y="1" width="22" height="22"/></svg>
    <svg viewBox="0 0 24 24"><rect x="3.500" y="1.500" width="17" height="21" fill="#e6e2e6" stroke="#7b757b"/><rect x="6" y="4" width="12" height="7" fill="#b79dbb" stroke="#7f6583"/><rect x="6" y="13" width="12" height="7" fill="#b79dbb" stroke="#7f6583"/><path d="M9 7h6M9 16h6" stroke="#fff" stroke-width="2"/></svg>
    <svg viewBox="0 0 24 24"><ellipse cx="7" cy="7" rx="5.500" ry="6" fill="#e8e8e6" stroke="#777"/><path d="M7 7 13 3M6 13l-2 8h7" stroke="#888" stroke-width="1.500" fill="none"/><rect x="11" y="10" width="12" height="9" fill="#3465a4" stroke="#ddd"/><path d="M13 22h8" stroke="#888" stroke-width="2"/></svg>
    <svg><use href="#ffox"/></svg>
    <svg viewBox="0 0 24 24"><circle cx="12" cy="12" r="11" fill="#38a047"/><path d="M2.500 6.500A11 11 0 0 1 21.500 7H12a5 5 0 0 0-5 4z" fill="#dd3b30"/><path d="M22 7a11 11 0 0 1-10.500 16l5-9a5 5 0 0 0-1-7z" fill="#fbce38"/><circle cx="12" cy="12" r="5" fill="#f2f2f2"/><circle cx="12" cy="12" r="4" fill="#3f80d8"/></svg>
    <svg><use href="#tbird"/></svg>
    <svg><use href="#bubble"/></svg>
    <svg viewBox="0 0 24 24"><rect x="2" y="1" width="20" height="22" rx="8" fill="#30a9e6"/><path d="M15.500 8.500c-1-3-7-2.500-7 0 0 3 7.500 2 7.500 5.500 0 3.500-7 3.500-8 0" fill="none" stroke="#fff" stroke-width="2.400"/></svg>
    <svg viewBox="0 0 24 24"><circle cx="12" cy="12" r="10.500" fill="#4a3060"/><path d="M2.500 9h19M2 12h20M2.500 15h19" stroke="#e5dff0" stroke-width="1.400"/></svg>
    <svg viewBox="0 0 24 24"><path d="M1 11C3 4 9 1 14 2l6-1-3 4c2 4 3 9 2 13l3 3-8 1-1-4c-2-3-7-4-12-3l4-3z" fill="#1c1f22"/><path d="M4 13c4-3 8-2 10 2l2 5-3-2c-2-3-6-4-9-5z" fill="#f2f2f2"/><circle cx="8" cy="7" r="1.300" fill="#fff"/></svg>
    <svg viewBox="0 0 24 24"><path d="M2 4c3-4 8-3 10-1 3-2 9-2 11 2 0 5-2 9-4 10l-3-1v8h-5l-1-8-4 2C2 13 1 7 2 4z" fill="#336791" stroke="#1c3a55"/><path d="M8 4c3 2 2 7 1 10M15 4c-2 3-1 7 1 10" fill="none" stroke="#e5edf5" stroke-width="1.300"/></svg>
    <svg viewBox="0 0 24 24"><path d="M14 1c6 6 9 12 9 17 0 3-3 5-7 5s-6-3-6-6c0-5 4-10 4-16z" fill="#54a820"/><path d="M12 8c2 5 3 14-3 15-5 1-9-1-8-4 2-3 8-4 11-11z" fill="#8ad12e"/></svg>
    <svg viewBox="0 0 24 24"><rect width="24" height="24" fill="#fff"/><path d="M12 4 5 18M12 4l7 14M12 4v14M8 11h8M5 18h14M8 11l4 7 4-7" stroke="#7ab3da"/><circle cx="12" cy="4" r="2.300" fill="#2f7fba"/><circle cx="8" cy="11" r="2.300" fill="#3f8fc8"/><circle cx="16" cy="11" r="2.300" fill="#3f8fc8"/><circle cx="5" cy="18" r="2.300" fill="#2f7fba"/><circle cx="12" cy="18" r="2.300" fill="#2f7fba"/><circle cx="19" cy="18" r="2.300" fill="#2f7fba"/></svg>
    <svg viewBox="0 0 24 24"><rect x="2.500" y="2.500" width="19" height="19" rx="1" fill="#f4d51a" stroke="#b69700"/><path d="M6 16 18 7v3l-8 6zM6 17h12" fill="#fff8c0" stroke="#a98a00"/></svg>
    <svg viewBox="0 0 24 24"><circle cx="12" cy="12" r="10.500" fill="#dfe0e0" stroke="#c3c3c3"/><path d="M12 12 5 4a11 11 0 0 1 7-2zM12 12l8 7a11 11 0 0 1-8 4z" fill="#f3f0f6"/><circle cx="12" cy="12" r="3" fill="#d6cdc2" stroke="#fff"/></svg>
    <svg viewBox="0 0 24 24"><rect x="1" y="2" width="22" height="16" rx="1" fill="#5a5d60" stroke="#333"/><rect x="3" y="4" width="18" height="12" fill="#2c3440"/><path d="M3 11h5l2-5 3 8 2-4h6" fill="none" stroke="#9cc4ea" stroke-width="1.300"/><path d="M6 21.500h12" stroke="#777" stroke-width="3"/></svg>
    <svg><use href="#pad"/></svg>
    <svg><use href="#wand"/></svg>
  </div>
  <div class="h-full flex-none flex [&>div]:w-[88.600px] [&>div]:flex [&>div]:items-center [&>div]:gap-[8px] [&>div]:pl-[8px] [&>div]:border-r-2 [&>div]:border-[#c5bdb4] [&>div]:bg-linear-to-b [&>div]:from-[#f6f4f2] [&>div]:to-[#d9d0c8]">
    <div><svg class="w-4 h-[14px]"><use href="#folder"/></svg>doc…</div>
    <div class="from-[#a39789]! to-[#b3a699]!"><svg class="size-[18px]"><use href="#ffox"/></svg>Doli…</div>
    <div><svg class="size-4" viewBox="0 0 16 16"><rect width="16" height="16" rx="2" fill="#3c35a0"/><circle cx="8" cy="8" r="5.500" fill="#cfcbf0"/><path d="M3 6.500h13M3 9.500h13" stroke="#3c35a0" stroke-width="1.300"/></svg>&lt;&lt;P…</div>
    <div><svg class="size-[17px]" viewBox="0 0 17 17"><path d="M3 8l1-5 2 1 1-3 3 1 2-1 2 7z" fill="#e5552c"/><path d="M1 7h15v9H1z" fill="#c6902f" stroke="#6b4a10"/><path d="M1 7h15v3H1z" fill="#e6bc62"/></svg>Kylie…</div>
    <div><svg class="size-[18px]"><use href="#bubble"/></svg>JF F…</div>
    <div><svg class="size-4 opacity-50"><use href="#term"/></svg>[Ter…</div>
    <div><svg class="size-[17px] opacity-50"><use href="#tbird"/></svg>[Cou…</div>
    <div><svg class="size-[18px]"><use href="#notepad"/></svg>doli…</div>
  </div>
  <div class="h-full flex-1 flex items-center pl-[4px] [&>svg]:flex-none">
    <svg class="w-[22px] h-[18px] mr-[5px]" viewBox="0 0 22 18"><rect x=".5" y=".5" width="21" height="17" fill="#eee" stroke="#444"/><rect x="2" y="2" width="18" height="14" fill="#6d4770"/><path d="M4 4h3v2H4zM4 8h3v2H4zM4 12h3v2H4z" fill="#e8dcea"/></svg>
    <svg class="w-[22px] h-[24px] mr-[6px]" viewBox="0 0 23 25"><path d="M3 5h17l-2 18c-3 2-10 2-13 0z" fill="#d8d8d6" stroke="#666"/><path d="M5 8l12 12M10 8l8 8M18 8 6 20M13 7 5 15M7 23 18 12" stroke="#777"/><ellipse cx="11.500" cy="4.500" rx="9.500" ry="3.500" fill="#eee" stroke="#555"/></svg>
    <svg class="w-[37px] h-[27px] mr-[15px] bg-black" viewBox="0 0 37 27"><path d="M1 27v-3h4v-3h2v4h2v-8h1v6h2v-4h2v5h1v-9h2v9h2v-5h2v5h2v-12h2v8h2v4h2v-3h4v6z" fill="#1180c8"/></svg>
    <svg class="w-[27px] h-[26px] mr-[3px]"><use href="#pad"/></svg>
    <svg class="w-[24px] h-[29px] mr-[2px] bg-[#dcdcdc]" viewBox="0 0 24 29"><circle cx="12" cy="12" r="11" fill="#1c2030"/><circle cx="6" cy="9" r="4" fill="#e05c22"/><circle cx="15" cy="5" r="3.500" fill="#3ea0d8"/><circle cx="19" cy="12" r="3.500" fill="#7ab64a"/><circle cx="12" cy="18" r="3.500" fill="#3a5ab8"/><circle cx="12" cy="11" r="3.500" fill="#a9adb5"/></svg>
    <svg class="w-[22px] h-[24px] mr-[3px]" viewBox="0 0 22 24"><ellipse cx="11" cy="12" rx="10" ry="10.500" fill="url(#gGreen)" stroke="#3e8a18" stroke-width="1.300"/></svg>
    <svg class="w-[22px] h-[24px] mr-[2px]"><use href="#wand"/></svg>
    <svg class="w-[23px] h-[22px] mr-[6px]" viewBox="0 0 23 22"><path d="M0 7h4l6-6v20l-6-6H0z" fill="#444"/><path d="M12 7c2 2 2 6 0 8M15 4c4 4 4 10 0 14M18 2c6 6 6 12 0 18" fill="none" stroke="#8a8683" stroke-width="1.600"/></svg>
    <svg class="w-[27px] h-[27px] mr-[7px]" viewBox="0 0 27 27"><rect x="9" y="1" width="17" height="13" fill="#ddd" stroke="#666"/><rect x="11" y="3" width="13" height="9" fill="#6d4770"/><rect x="1" y="9" width="17" height="13" fill="#ddd" stroke="#666"/><rect x="3" y="11" width="13" height="9" fill="#6d4770"/><path d="M4 24.500h13" stroke="#777" stroke-width="3"/><path d="M20 18h6" stroke="#888" stroke-width="3"/></svg>
    <svg class="w-[22px] h-[22px] mr-[7px]" viewBox="0 0 22 22"><path d="M3 0h16q3 0 3 3v9q0 3-3 3h-2v7l-6-7H3q-3 0-3-3V3q0-3 3-3z" fill="#474543"/></svg>
    <span class="w-[132px] flex-none">Laurent Destailleur</span>
    <span class="h-full flex items-center border-l border-[#c8c0b8] pl-[4px] whitespace-pre tracking-[-0.12px]">mer.  9 nov., 17:41</span>
  </div>
</footer>

<!-- Pointer -->
<svg class="absolute left-[1066px] top-[411px] w-[13px] h-[21px]" viewBox="0 0 13 21"><path d="M.8.800v16.500l3.800-3.600 3 6.500 2.600-1.200-3-6.300h5z" fill="#fff" stroke="#222" stroke-width="1.200"/></svg>

<script>
const range = (start, step, n) => Array.from({length: n}, (_, i) => start + i * step);
const decimals = ['1.0', '0.8', '0.6', '0.4', '0.2', '0.0'];
const charts = [
  {title: 'Dernière heure', y: ['800', '750', '700', '650', '600'], ys: 5, major: range(123.5, 66.650, 6), minor: range(83.500, 13.330, 29),
   labels: ['16:50', '17:00', '17:10', '17:20', '17:30', '17:40'].map((t, i) => [t, 124.500 + 66.500 * i]), vals: ['622.78', '760.81', '793.32'],
   line: 'M457 111.500h1.500V38.500h1V29.500h1V25.500h2.500v2h1v5h1v-2h1.500'},
  {title: 'Dernier jour', y: decimals, ys: 10, major: range(71.500, 100, 4), minor: range(71.500, 16.670, 24), labels: [['Wed 00:00', 172.300], ['Wed 12:00', 372.300]]},
  {title: 'Dernière semaine', y: decimals, ys: 10, major: range(81.500, 57, 7), minor: range(81.500, 14.250, 27), labels: ['03', '04', '05', '06', '07', '08', '09'].map((t, i) => [t, 110.500 + 57.100 * i])},
  {title: 'Dernier mois', y: decimals, ys: 10, major: range(146.500, 90.400, 4), minor: range(69.300, 12.900, 31), labels: ['41', '42', '43', '44', '45'].map((t, i) => ['Week ' + t, 102 + 90.200 * i])},
  {title: 'Dernière année', y: decimals, ys: 10, major: [89.500, 123.500, 157.500, 188.500, 221.500, 254.500, 288.500, 321.500, 355.500, 389.500, 422.500, 456.500], minor: [],
   labels: [['Nov', 73], ['Dec', 106.800], ['Jan', 141.200], ['Feb', 175], ['Mar', 206.300], ['Apr', 240.100], ['May', 273.200], ['Jun', 307], ['Jul', 339.600], ['Aug', 374], ['Sep', 408.400], ['Oct', 439.700]]}
];
const snap = v => Math.floor(v) + .5;
const small = (t, x, y, anchor) => `<text x="${x}" y="${y}" font-size="8.500" text-anchor="${anchor}" textLength="${t.length * 6 - .5}" lengthAdjust="spacingAndGlyphs">${t}</text>`;
const big = (t, x, y, anchor = 'start') => `<text x="${x}" y="${y}" font-size="11" text-anchor="${anchor}" textLength="${t.length * 7 - .5}" lengthAdjust="spacingAndGlyphs">${t}</text>`;
function draw(c) {
  let s = '<rect x="67" y="22" width="401" height="100" fill="#fff"/>';
  for (const x of c.minor) {
    if (c.major.some(m => Math.abs(m - x) < 3)) continue;
    s += `<path d="M${snap(x)} 20v104" stroke="#c8c8c8" stroke-dasharray="1 1"/>`;
  }
  const step = 100 / (c.y.length - 1);
  for (let y = 22.500; y < 122; y += c.ys) {
    if ((y - 22.500) % step) s += `<path d="M65 ${y}h404" stroke="#c8c8c8" stroke-dasharray="1 1"/>`;
  }
  c.y.forEach((t, i) => {
    const y = 22.500 + step * i;
    s += `<path d="M65 ${y}h404" stroke="#f09494" stroke-dasharray="1 1"/>` + small(t, 60, y + 3, 'end');
  });
  for (const x of c.major) s += `<path d="M${snap(x)} 20v105" stroke="#f09494" stroke-dasharray="1 1"/>`;
  s += '<path d="M66.500 20v106M63 122.500h407" stroke="#4a4040"/><path d="M63.500 20h6l-3-5zM469 119.500v6l5-3z" fill="#7f1f1f"/>';
  if (c.line) s += `<path d="${c.line}" fill="none" stroke="#0000f0"/>`;
  for (const [t, x] of c.labels) s += small(t, x, 134.500, 'middle');
  s += '<text transform="translate(14 78) rotate(-90)" font-size="10.500">ms</text>';
  s += '<text transform="translate(485 6) rotate(90)" font-size="8" fill="#a9a9a9" textLength="110" lengthAdjust="spacingAndGlyphs">RRDTOOL / TOBI OETIKER</text>';
  s += '<rect x="15.500" y="143.500" width="8" height="9" fill="#00f" stroke="#000"/><rect x="87.500" y="143.500" width="8" height="9" fill="#f00" stroke="#000"/>';
  s += big('Graph1', 30, 152) + big('Errors', 102, 152);
  ['Minval', 'Avgval', 'Maxval'].forEach((n, i) => {
    const x = 16.300 + 121 * i;
    s += big(n + '1', x, 166) + big(n + '2', x, 180) + big(c.vals ? c.vals[i] : '-nan', x + 105, 166, 'end') + big('-nan', x + 105, 180, 'end');
  });
  return s;
}
document.getElementById('charts').innerHTML = charts.map(c => `
  <figure class="w-[497px] h-[204px]">
    <figcaption class="h-[14px] leading-[14px] text-black">${c.title}</figcaption>
    <div class="w-[497px] h-[190px] bg-[#f3f3f3] border-2 border-t-[#cfcfcf] border-l-[#cfcfcf] border-r-[#9e9e9e] border-b-[#9e9e9e]">
      <svg class="-m-[2px] w-[497px] h-[190px] font-['DejaVu_Sans_Mono',monospace]" viewBox="0 0 497 190">${draw(c)}</svg>
    </div>
  </figure>`).join('');
</script>
</body>
</html>
